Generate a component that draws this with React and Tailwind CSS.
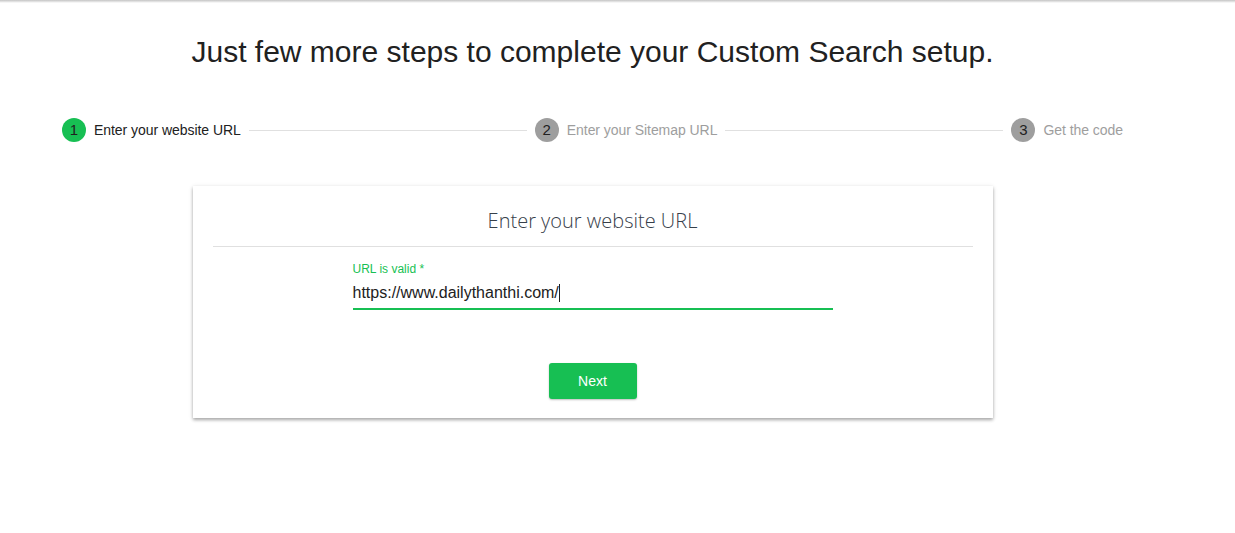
import { Fragment } from "react";

export default function App() {
  const steps = [
    { n: 1, label: "Enter your website URL", active: true },
    { n: 2, label: "Enter your Sitemap URL", active: false },
    { n: 3, label: "Get the code", active: false },
  ];
  return (
    <div className="min-h-screen bg-white font-['Liberation_Sans',Arial,sans-serif]">
      <div className="h-[3px] bg-gradient-to-b from-[#c4c4c4] to-white" />
      <div className="w-[1185px]">
        <h1 className="pt-[31px] text-center text-[30px] leading-[36px] text-[#212121]">
          Just few more steps to complete your Custom Search setup.
        </h1>
        <div className="mt-[48px] flex items-center px-[62px]">
          {steps.map((s, i) => (
            <Fragment key={s.n}>
              <div
                className={`flex h-6 w-6 shrink-0 items-center justify-center rounded-full text-[15px] text-[#212121] ${
                  s.active ? "bg-[#17bf53]" : "bg-[#9e9e9e]"
                }`}
              >
                {s.n}
              </div>
              <span
                className={`ml-2 whitespace-nowrap text-[14px] leading-[24px] tracking-[-0.05px] ${
                  s.active ? "text-[#212121]" : "text-[#9e9e9e]"
                }`}
              >
                {s.label}
              </span>
              {i < steps.length - 1 && <div className="mx-2 h-px flex-1 bg-[#e0e0e0]" />}
            </Fragment>
          ))}
        </div>
        <div className="mx-auto mt-[44px] w-[800px] bg-white pb-[19px] pt-[21px] shadow-[0_2px_3px_rgba(0,0,0,0.28),0_1px_5px_rgba(0,0,0,0.12)]">
          <h2 className="text-center font-['Open_Sans',sans-serif] text-[20px] font-light leading-[28px] text-[#37404a]">
            Enter your website URL
          </h2>
          <div className="mx-[20px] mt-[11px] h-px bg-[#e0e0e0]" />
          <div className="mx-auto mt-[15px] w-[480px]">
            <div className="text-[12px] leading-[14px] text-[#17bf53]">URL is valid *</div>
            <div className="mt-[7px] flex items-center text-[16px] leading-[20px] text-[#212121]">
              <span>https://www.dailythanthi.com/</span>
              <span className="h-[18px] w-px bg-[#212121]" />
            </div>
            <div className="mt-[5px] h-[2px] bg-[#17bf53]" />
          </div>
          <div className="mt-[53px] flex justify-center">
            <button className="h-9 w-[88px] rounded-[3px] bg-[#17bf53] text-[14px] text-white shadow-[0_1px_2px_rgba(0,0,0,0.25)]">
              Next
            </button>
          </div>
        </div>
      </div>
    </div>
  );
}
